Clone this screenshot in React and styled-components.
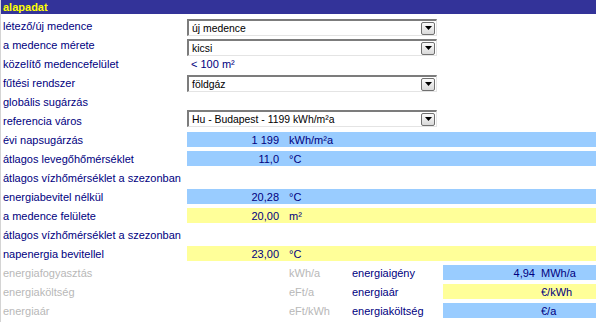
import React from 'react';
import styled, { createGlobalStyle } from 'styled-components';

const Global = createGlobalStyle`
  html, body { margin: 0; padding: 0; background: #fff; }
  body {
    width: 596px; height: 322px; overflow: hidden;
    font-family: "Liberation Sans", Arial, sans-serif;
  }
`;

const NAVY = '#000080';
const TONES = { blue: '#99ccff', yellow: '#ffff99', none: 'transparent' };

const Sheet = styled.div`
  width: 596px;
  height: 322px;
  box-sizing: border-box;
  border-left: 1px solid #d4d4d4;
  display: flex;
  flex-direction: column;
`;

const Header = styled.div`
  height: 14px;
  line-height: 14px;
  background: #333399;
  color: #ffff00;
  font-weight: bold;
  font-size: 11px;
  padding-left: 2px;
`;

const Row = styled.div`
  height: 19px;
  display: flex;
  align-items: flex-start;
  flex-shrink: 0;
`;

const Label = styled.div`
  width: ${(p) => p.$w || 186}px;
  flex-shrink: 0;
  box-sizing: border-box;
  padding-left: ${(p) => p.$pl ?? 2}px;
  padding-top: 5px;
  font-size: 11px;
  line-height: 14px;
  white-space: nowrap;
  color: ${(p) => (p.$muted ? '#b8b8b8' : NAVY)};
`;

const Bar = styled.div`
  margin-top: 4px;
  height: 15px;
  box-sizing: border-box;
  padding-top: 1px;
  display: flex;
  background: ${(p) => TONES[p.$tone || 'none']};
  ${(p) => (p.$w ? `width: ${p.$w}px; flex-shrink: 0;` : 'flex: 1;')}
  font-size: 11px;
  line-height: 14px;
  color: ${NAVY};
  white-space: nowrap;
`;

const Value = styled.div`
  width: ${(p) => p.$w || 96}px;
  flex-shrink: 0;
  box-sizing: border-box;
  text-align: right;
  padding-right: ${(p) => p.$pr ?? 4}px;
`;

const Unit = styled.div`
  padding-left: ${(p) => p.$pl ?? 6}px;
  color: ${(p) => (p.$muted ? '#b8b8b8' : NAVY)};
`;

const Plain = styled.div`
  padding-left: 4px;
  padding-top: 5px;
  font-size: 11px;
  line-height: 14px;
  color: ${NAVY};
  white-space: nowrap;
`;

const SelectBox = styled.div`
  margin-top: ${(p) => p.$top ?? 4}px;
  width: 250px;
  height: 17px;
  flex-shrink: 0;
  box-sizing: border-box;
  border-top: 2px solid #7c7c7c;
  border-left: 2px solid #7c7c7c;
  border-right: 1px solid #e4e4e4;
  border-bottom: 1px solid #e4e4e4;
  background: #fff;
  display: flex;
  align-items: center;
  justify-content: space-between;
  padding-left: 3px;
  font-size: 10.4px;
  color: #000;
  white-space: nowrap;
`;

const DropButton = styled.div`
  width: 14px;
  height: 13px;
  margin-right: 1px;
  box-sizing: border-box;
  border: 1px solid #707070;
  border-radius: 2px;
  background: linear-gradient(#fbfbfb, #d9d9d9);
  display: flex;
  align-items: center;
  justify-content: center;
`;

const Select = ({ value, top }) => (
  <SelectBox $top={top}>
    <span>{value}</span>
    <DropButton>
      <svg width="7" height="4" viewBox="0 0 7 4">
        <path d="M0 0H7L3.5 4Z" fill="#000" />
      </svg>
    </DropButton>
  </SelectBox>
);

const FieldRow = ({ label, value, unit, tone }) => (
  <Row>
    <Label>{label}</Label>
    <Bar $tone={tone}>
      <Value>{value}</Value>
      <Unit>{unit}</Unit>
    </Bar>
  </Row>
);

const SummaryRow = ({ label, unit, label2, value, unit2, tone }) => (
  <Row>
    <Label $muted>{label}</Label>
    <Bar $w={96} />
    <Bar $w={66}>
      <Unit $muted>{unit}</Unit>
    </Bar>
    <Label $w={94} $pl={3}>{label2}</Label>
    <Bar $w={153} $tone={tone}>
      <Value $w={95} $pr={3}>{value}</Value>
      <Unit $pl={3}>{unit2}</Unit>
    </Bar>
  </Row>
);

export default function App() {
  return (
    <>
      <Global />
      <Sheet>
        <Header>alapadat</Header>
        <Row>
          <Label>létező/új medence</Label>
          <Select value="új medence" top={5} />
        </Row>
        <Row>
          <Label>a medence mérete</Label>
          <Select value="kicsi" top={6} />
        </Row>
        <Row>
          <Label>közelítő medencefelület</Label>
          <Plain>&lt; 100 m²</Plain>
        </Row>
        <Row>
          <Label>fűtési rendszer</Label>
          <Select value="földgáz" top={4} />
        </Row>
        <Row>
          <Label>globális sugárzás</Label>
        </Row>
        <Row>
          <Label>referencia város</Label>
          <Select value="Hu - Budapest - 1199 kWh/m²a" top={1} />
        </Row>
        <FieldRow label="évi napsugárzás" value="1 199" unit="kWh/m²a" tone="blue" />
        <FieldRow label="átlagos levegőhőmérséklet" value="11,0" unit="°C" tone="blue" />
        <Row>
          <Label>átlagos vízhőmérséklet a szezonban</Label>
        </Row>
        <FieldRow label="energiabevitel nélkül" value="20,28" unit="°C" tone="blue" />
        <FieldRow label="a medence felülete" value="20,00" unit="m²" tone="yellow" />
        <Row>
          <Label>átlagos vízhőmérséklet a szezonban</Label>
        </Row>
        <FieldRow label="napenergia bevitellel" value="23,00" unit="°C" tone="yellow" />
        <SummaryRow label="energiafogyasztás" unit="kWh/a" label2="energiaigény" value="4,94" unit2="MWh/a" tone="blue" />
        <SummaryRow label="energiaköltség" unit="eFt/a" label2="energiaár" value="" unit2="€/kWh" tone="yellow" />
        <SummaryRow label="energiaár" unit="eFt/kWh" label2="energiaköltség" value="" unit2="€/a" tone="blue" />
      </Sheet>
    </>
  );
}
